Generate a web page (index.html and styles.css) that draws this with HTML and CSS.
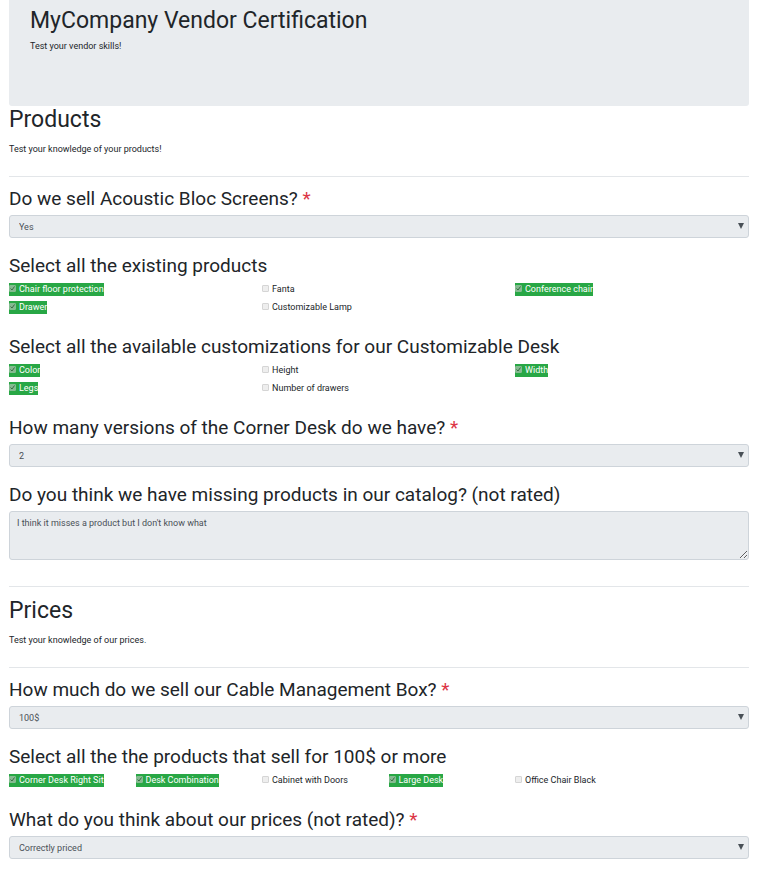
FILE: index.html
```html
<!DOCTYPE html>
<html lang="en">
<head>
<meta charset="utf-8">
<meta name="viewport" content="width=device-width, initial-scale=1">
<title>MyCompany Vendor Certification</title>
<link rel="stylesheet" href="styles.css">
</head>
<body>
<main class="page">
  <header class="hero">
    <h1 class="title">MyCompany Vendor Certification</h1>
    <p class="text">Test your vendor skills!</p>
  </header>

  <section class="section">
    <h2 class="title">Products</h2>
    <p class="text intro">Test your knowledge of your products!</p>
    <hr class="rule">

    <div class="question">
      <label class="prompt" for="screens">Do we sell Acoustic Bloc Screens? <span class="required">*</span></label>
      <div class="select"><select class="control" id="screens" disabled><option>Yes</option></select></div>
    </div>

    <fieldset class="question">
      <legend class="prompt">Select all the existing products</legend>
      <div class="options">
        <div class="cell"><label class="option correct"><input type="checkbox" class="tick" checked disabled>Chair floor protection</label></div>
        <div class="cell"><label class="option"><input type="checkbox" class="tick" disabled>Fanta</label></div>
        <div class="cell"><label class="option correct"><input type="checkbox" class="tick" checked disabled>Conference chair</label></div>
        <div class="cell"><label class="option correct"><input type="checkbox" class="tick" checked disabled>Drawer</label></div>
        <div class="cell"><label class="option"><input type="checkbox" class="tick" disabled>Customizable Lamp</label></div>
      </div>
    </fieldset>

    <fieldset class="question">
      <legend class="prompt">Select all the available customizations for our Customizable Desk</legend>
      <div class="options">
        <div class="cell"><label class="option correct"><input type="checkbox" class="tick" checked disabled>Color</label></div>
        <div class="cell"><label class="option"><input type="checkbox" class="tick" disabled>Height</label></div>
        <div class="cell"><label class="option correct"><input type="checkbox" class="tick" checked disabled>Width</label></div>
        <div class="cell"><label class="option correct"><input type="checkbox" class="tick" checked disabled>Legs</label></div>
        <div class="cell"><label class="option"><input type="checkbox" class="tick" disabled>Number of drawers</label></div>
      </div>
    </fieldset>

    <div class="question">
      <label class="prompt" for="versions">How many versions of the Corner Desk do we have? <span class="required">*</span></label>
      <div class="select"><select class="control" id="versions" disabled><option>2</option></select></div>
    </div>

    <div class="question">
      <label class="prompt" for="missing">Do you think we have missing products in our catalog? (not rated)</label>
      <textarea class="control comment" id="missing" rows="3" disabled>I think it misses a product but I don't know what</textarea>
    </div>
    <hr class="rule rule-end">
  </section>

  <section class="section">
    <h2 class="title">Prices</h2>
    <p class="text intro">Test your knowledge of our prices.</p>
    <hr class="rule">

    <div class="question">
      <label class="prompt" for="cable">How much do we sell our Cable Management Box? <span class="required">*</span></label>
      <div class="select"><select class="control" id="cable" disabled><option>100$</option></select></div>
    </div>

    <fieldset class="question">
      <legend class="prompt">Select all the the products that sell for 100$ or more</legend>
      <div class="options options-six">
        <div class="cell"><label class="option correct"><input type="checkbox" class="tick" checked disabled>Corner Desk Right Sit</label></div>
        <div class="cell"><label class="option correct"><input type="checkbox" class="tick" checked disabled>Desk Combination</label></div>
        <div class="cell"><label class="option"><input type="checkbox" class="tick" disabled>Cabinet with Doors</label></div>
        <div class="cell"><label class="option correct"><input type="checkbox" class="tick" checked disabled>Large Desk</label></div>
        <div class="cell"><label class="option"><input type="checkbox" class="tick" disabled>Office Chair Black</label></div>
      </div>
    </fieldset>

    <div class="question">
      <label class="prompt" for="opinion">What do you think about our prices (not rated)? <span class="required">*</span></label>
      <div class="select"><select class="control" id="opinion" disabled><option>Correctly priced</option></select></div>
    </div>
  </section>
</main>
</body>
</html>
```
FILE: styles.css
```css
* {
  box-sizing: border-box;
}

body {
  margin: 0;
  background: #fff;
  color: #212529;
  font-family: Roboto, "Liberation Sans", sans-serif;
  font-size: 9px;
  line-height: 14px;
}

.page {
  padding: 0 10px 0 9px;
}

.hero {
  padding: 7px 21px 53px;
  background: #e9ecef;
  border-radius: 0 0 3px 3px;
}

.title {
  margin: 0;
  font-size: 23px;
  font-weight: 400;
  line-height: 28px;
}

.hero .title {
  margin-bottom: 4px;
}

.text {
  margin: 0;
}

.intro {
  margin-top: 8px;
}

.rule {
  height: 1px;
  margin: 20px 0 10px;
  border: 0;
  background: #e3e6e9;
}

.rule-end {
  margin-top: 10px;
}

.question {
  min-width: 0;
  margin: 0;
  padding: 0 0 16px;
  border: 0;
}

.prompt {
  display: block;
  margin-bottom: 4px;
  padding: 0;
  font-size: 19px;
  line-height: 24px;
}

.required {
  color: #dc3545;
}

.select {
  position: relative;
}

.select::after {
  content: "";
  position: absolute;
  top: 8px;
  right: 5px;
  width: 6px;
  height: 6px;
  background: #495057;
  clip-path: polygon(0 0, 100% 0, 50% 100%);
  pointer-events: none;
}

.control {
  display: block;
  width: 100%;
  height: 23px;
  margin: 0;
  padding: 0 9px;
  border: 1px solid #ced4da;
  border-radius: 3px;
  background: #e9ecef;
  color: #495057;
  font: inherit;
  opacity: 1;
  appearance: none;
}

.comment {
  height: 49px;
  padding: 4px 7px;
  resize: vertical;
}

.options {
  display: grid;
  grid-template-columns: repeat(3, 1fr);
  margin: 0 -10px 0 -9px;
  padding-top: 1px;
}

.options-six {
  grid-template-columns: repeat(6, 1fr);
}

.cell {
  display: flex;
  height: 18px;
  padding-left: 9px;
}

.option {
  display: flex;
  height: 13px;
  line-height: 13px;
  white-space: nowrap;
}

.correct {
  background: #28a745;
  color: #fff;
}

.tick {
  width: 7px;
  height: 7px;
  margin: 2px 3px 0 0;
  border: 1px solid #d5d5d5;
  border-radius: 1px;
  background: #eee;
  appearance: none;
}

.correct .tick {
  border-color: #84bd90;
  background: #86b991 url("data:image/svg+xml,%3Csvg xmlns='http://www.w3.org/2000/svg' viewBox='0 0 5 5'%3E%3Cpath d='M.5 2.5 2 4 4.5.5' fill='none' stroke='%23376b43'/%3E%3C/svg%3E") center / 5px 5px no-repeat;
}
```
